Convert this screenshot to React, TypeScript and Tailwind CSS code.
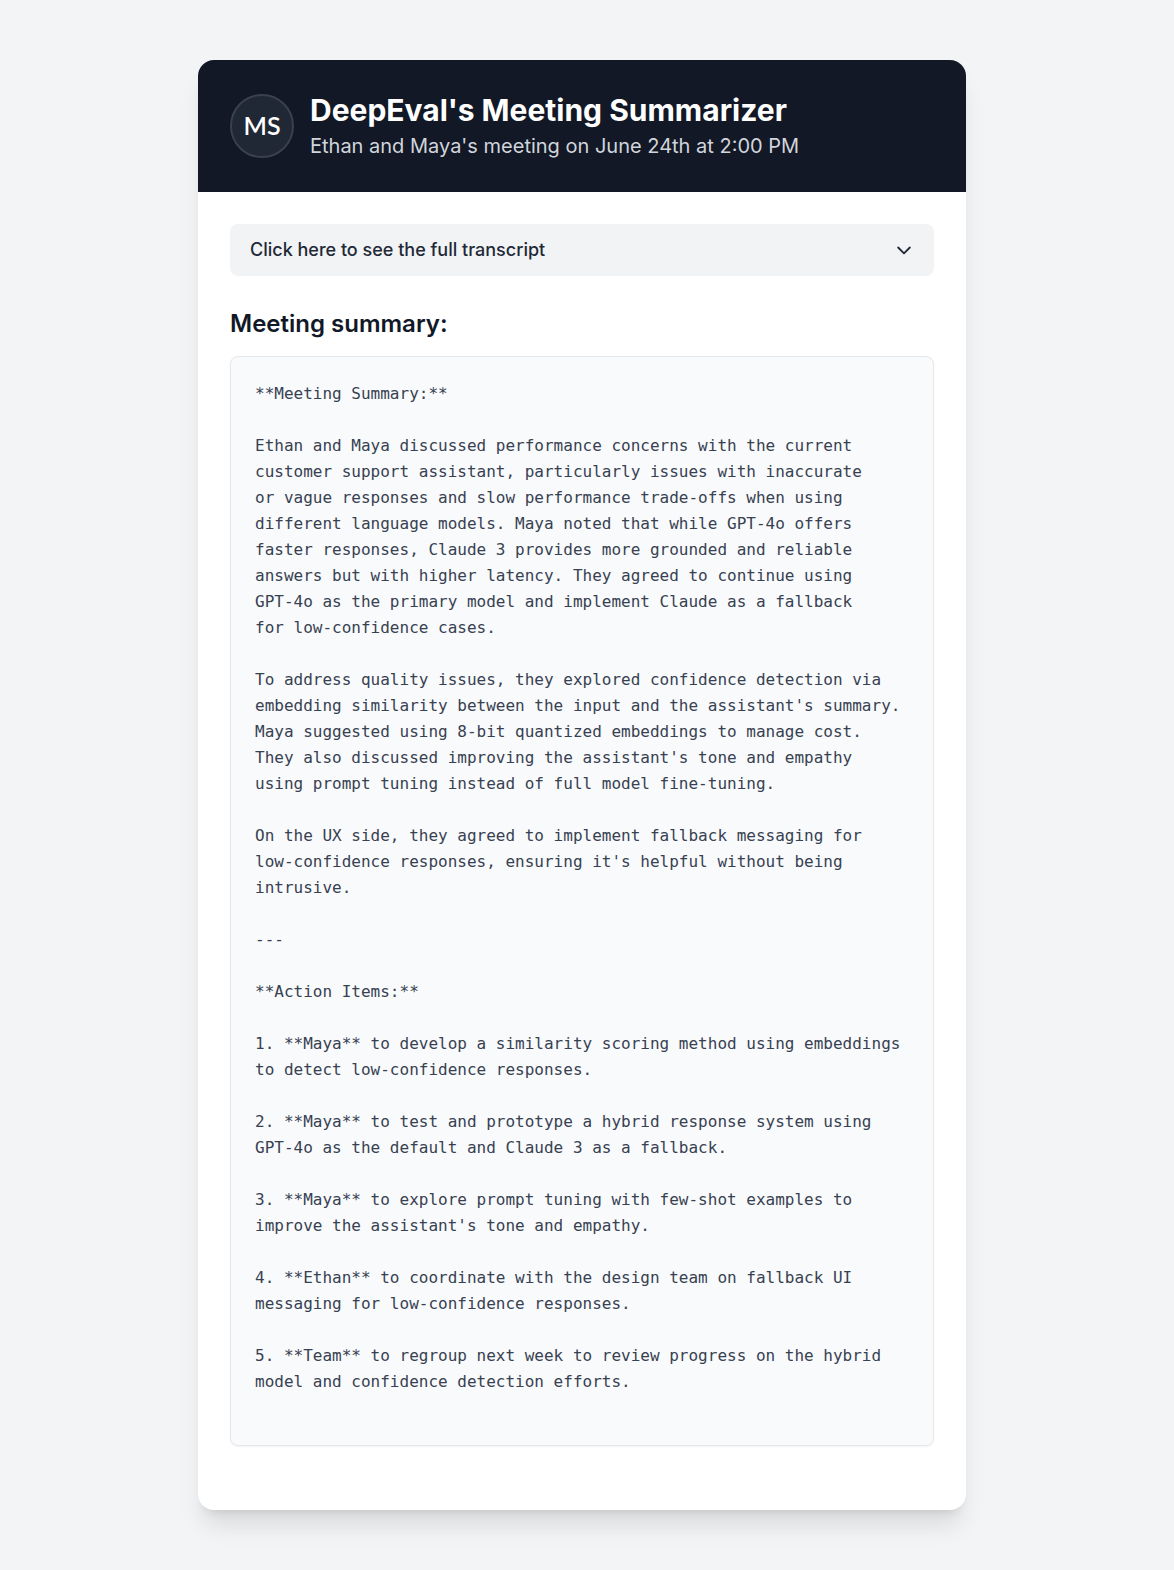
const summary = `**Meeting Summary:**

Ethan and Maya discussed performance concerns with the current
customer support assistant, particularly issues with inaccurate
or vague responses and slow performance trade-offs when using
different language models. Maya noted that while GPT-4o offers
faster responses, Claude 3 provides more grounded and reliable
answers but with higher latency. They agreed to continue using
GPT-4o as the primary model and implement Claude as a fallback
for low-confidence cases.

To address quality issues, they explored confidence detection via
embedding similarity between the input and the assistant's summary.
Maya suggested using 8-bit quantized embeddings to manage cost.
They also discussed improving the assistant's tone and empathy
using prompt tuning instead of full model fine-tuning.

On the UX side, they agreed to implement fallback messaging for
low-confidence responses, ensuring it's helpful without being
intrusive.

---

**Action Items:**

1. **Maya** to develop a similarity scoring method using embeddings
to detect low-confidence responses.

2. **Maya** to test and prototype a hybrid response system using
GPT-4o as the default and Claude 3 as a fallback.

3. **Maya** to explore prompt tuning with few-shot examples to
improve the assistant's tone and empathy.

4. **Ethan** to coordinate with the design team on fallback UI
messaging for low-confidence responses.

5. **Team** to regroup next week to review progress on the hybrid
model and confidence detection efforts.
`;

function Header() {
  return (
    <header className="flex h-[132px] items-center gap-4 bg-[#121826] px-8">
      <div className="flex size-16 shrink-0 items-center justify-center rounded-full border-2 border-[#394150] bg-[#202735] font-['Lato',sans-serif] text-[25px] font-semibold text-white">
        MS
      </div>
      <div>
        <h1 className="text-[30px] leading-9 font-bold text-white">DeepEval's Meeting Summarizer</h1>
        <p className="mt-1 text-xl leading-7 text-[#d1d5db]">Ethan and Maya's meeting on June 24th at 2:00 PM</p>
      </div>
    </header>
  );
}

export default function App() {
  return (
    <div className="min-h-[1570px] bg-[#f2f4f6] pt-[60px] pr-[10px] font-['Inter',sans-serif]">
      <main className="mx-auto h-[1450px] w-3xl overflow-hidden rounded-2xl bg-white shadow-xl">
        <Header />
        <div className="p-8">
          <button className="flex h-[52px] w-full items-center justify-between rounded-lg bg-[#f2f3f5] px-5 text-lg font-medium text-[#1f2937]">
            <span>Click here to see the full transcript</span>
            <svg className="size-5" viewBox="0 0 24 24" fill="none" stroke="currentColor" strokeWidth="2.2" strokeLinecap="round" strokeLinejoin="round">
              <path d="M19 9l-7 7-7-7" />
            </svg>
          </button>
          <h2 className="mt-8 text-2xl font-semibold text-[#111827]">Meeting summary:</h2>
          <pre className="mt-4 h-[1090px] rounded-lg border border-[#e5e7eb] bg-[#f9fafc] p-6 font-['DejaVu_Sans_Mono',monospace] text-base leading-[26px] text-[#374151] shadow-xs">
            {summary}
          </pre>
        </div>
      </main>
    </div>
  );
}
